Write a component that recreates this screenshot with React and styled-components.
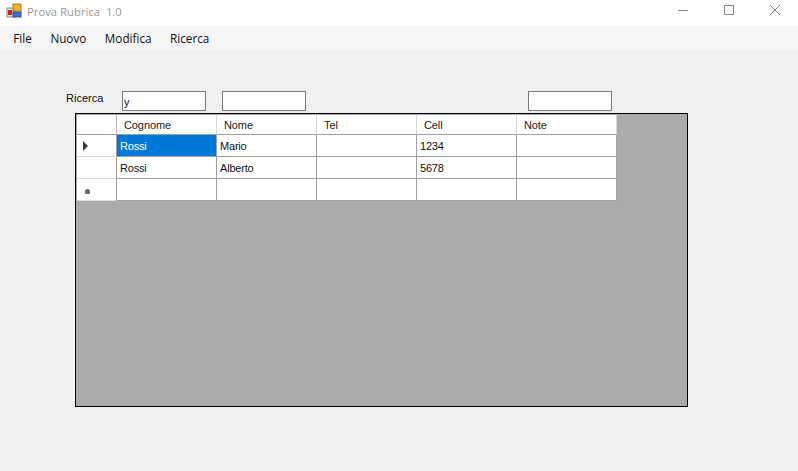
import React from 'react';
import styled, { createGlobalStyle } from 'styled-components';

const columns = ['Cognome', 'Nome', 'Tel', 'Cell', 'Note'];

const rows = [
  { marker: 'current', cells: ['Rossi', 'Mario', '', '1234', ''] },
  { marker: '', cells: ['Rossi', 'Alberto', '', '5678', ''] },
  { marker: 'new', cells: ['', '', '', '', ''] },
];

const AppIcon = () => (
  <svg width="16" height="16" viewBox="0 0 16 16">
    <rect x="1" y="5" width="8" height="9" fill="#e8e4da" stroke="#8d8a80" />
    <rect x="2" y="7" width="4" height="5" fill="#c8272a" />
    <rect x="7" y="1" width="8" height="7" fill="#f0b429" stroke="#a8801f" />
    <rect x="7" y="9" width="8" height="5" fill="#3f6fd0" stroke="#2c4f98" />
  </svg>
);

const MinimizeIcon = () => (
  <svg width="12" height="12" viewBox="0 0 12 12">
    <path d="M1 6.5h10" stroke="#8a8a8a" fill="none" />
  </svg>
);

const MaximizeIcon = () => (
  <svg width="12" height="12" viewBox="0 0 12 12">
    <rect x="1.5" y="1.5" width="9" height="9" stroke="#8a8a8a" fill="none" />
  </svg>
);

const CloseIcon = () => (
  <svg width="12" height="12" viewBox="0 0 12 12">
    <path d="M1 1l10 10M11 1L1 11" stroke="#8a8a8a" fill="none" />
  </svg>
);

const App = () => (
  <Page>
    <GlobalStyle />
    <TitleBar>
      <TitleGroup>
        <AppIcon />
        <Title>Prova Rubrica&nbsp; 1.0</Title>
      </TitleGroup>
      <WindowButtons>
        <WindowButton><MinimizeIcon /></WindowButton>
        <WindowButton><MaximizeIcon /></WindowButton>
        <WindowButton><CloseIcon /></WindowButton>
      </WindowButtons>
    </TitleBar>
    <MenuBar>
      <MenuItem>File</MenuItem>
      <MenuItem>Nuovo</MenuItem>
      <MenuItem>Modifica</MenuItem>
      <MenuItem>Ricerca</MenuItem>
    </MenuBar>
    <Content>
      <SearchRow>
        <SearchLabel>Ricerca</SearchLabel>
        <SearchInput $width={84} defaultValue="y" />
        <SearchInput $width={84} $left={16} />
        <SearchInput $width={84} $left={222} />
      </SearchRow>
      <GridFrame>
        <HeaderRow>
          <CornerCell />
          {columns.map((column) => (
            <HeaderCell key={column}>{column}</HeaderCell>
          ))}
        </HeaderRow>
        {rows.map((row, rowIndex) => (
          <DataRow key={rowIndex}>
            <RowHeader>
              {row.marker === 'current' && <CurrentMarker />}
              {row.marker === 'new' && <NewMarker />}
            </RowHeader>
            {row.cells.map((cell, cellIndex) => (
              <DataCell key={cellIndex} $selected={rowIndex === 0 && cellIndex === 0}>
                {cell}
              </DataCell>
            ))}
          </DataRow>
        ))}
      </GridFrame>
    </Content>
  </Page>
);

const GlobalStyle = createGlobalStyle`
  html, body {
    margin: 0;
    padding: 0;
    background: #f0f0f0;
  }
`;

const Page = styled.div`
  width: 798px;
  height: 471px;
  overflow: hidden;
  background: #f0f0f0;
  font-family: "Liberation Sans", Arial, sans-serif;
`;

const TitleBar = styled.div`
  height: 26px;
  background: #ffffff;
  display: flex;
  align-items: flex-start;
  justify-content: space-between;
  padding-left: 6px;
`;

const TitleGroup = styled.div`
  display: flex;
  align-items: center;
  gap: 5px;
  height: 20px;
  margin-top: 1px;
`;

const Title = styled.span`
  font-family: "Open Sans", sans-serif;
  font-size: 11.3px;
  color: #9a9a9a;
`;

const WindowButtons = styled.div`
  display: flex;
`;

const WindowButton = styled.div`
  width: 46px;
  height: 20px;
  display: flex;
  align-items: center;
  justify-content: center;
`;

const MenuBar = styled.div`
  height: 24px;
  background: #f5f5f5;
  display: flex;
  align-items: center;
  padding-left: 4px;
`;

const MenuItem = styled.div`
  font-family: "Open Sans", sans-serif;
  font-size: 11.7px;
  color: #111111;
  padding: 0 9.3px;
`;

const Content = styled.div`
  padding: 41px 0 0 66px;
`;

const SearchRow = styled.div`
  display: flex;
  align-items: flex-start;
  height: 22px;
`;

const SearchLabel = styled.div`
  width: 56px;
  font-size: 11px;
  line-height: 14px;
  color: #111111;
`;

const SearchInput = styled.input`
  box-sizing: border-box;
  width: ${(props) => props.$width}px;
  height: 20px;
  margin: 0 0 0 ${(props) => props.$left || 0}px;
  padding: 2px 1px 0;
  border: 1px solid #7a7a7a;
  border-radius: 0;
  outline: none;
  background: #ffffff;
  font-family: "Liberation Sans", Arial, sans-serif;
  font-size: 11px;
  color: #111111;
`;

const GridFrame = styled.div`
  box-sizing: border-box;
  width: 613px;
  height: 294px;
  margin-left: 9px;
  border: 1px solid #000000;
  padding: 1px 0 0 1px;
  background: #ababab;
`;

const HeaderRow = styled.div`
  display: flex;
  height: 20px;
`;

const DataRow = styled.div`
  display: flex;
  height: 22px;
`;

const CornerCell = styled.div`
  box-sizing: border-box;
  width: 40px;
  background: #ffffff;
  border-right: 1px solid #b5b5b5;
  border-bottom: 1px solid #a0a0a0;
`;

const HeaderCell = styled.div`
  box-sizing: border-box;
  width: 100px;
  padding: 2px 0 0 7px;
  background: #ffffff;
  border-right: 1px solid #d8d8d8;
  border-bottom: 1px solid #a0a0a0;
  font-size: 11px;
  line-height: 17px;
  letter-spacing: -0.1px;
  color: #222222;
`;

const RowHeader = styled.div`
  box-sizing: border-box;
  width: 40px;
  display: flex;
  align-items: center;
  padding-left: 6px;
  background: #ffffff;
  border-right: 1px solid #a0a0a0;
  border-bottom: 1px solid #dcdcdc;
`;

const CurrentMarker = styled.div`
  width: 0;
  height: 0;
  border-left: 5px solid #3c3c3c;
  border-top: 5px solid transparent;
  border-bottom: 5px solid transparent;
`;

const NewMarker = styled.div`
  width: 5px;
  height: 5px;
  margin: 3px 0 0 2px;
  border-radius: 50% 50% 1px 1px;
  background: #666666;
`;

const DataCell = styled.div`
  box-sizing: border-box;
  width: 100px;
  padding-left: 3px;
  background: ${(props) => (props.$selected ? '#0078d7' : '#ffffff')};
  border-right: 1px solid #a0a0a0;
  border-bottom: 1px solid #a0a0a0;
  font-size: 11px;
  line-height: 22px;
  letter-spacing: -0.2px;
  color: ${(props) => (props.$selected ? '#ffffff' : '#111111')};
`;

export default App;
